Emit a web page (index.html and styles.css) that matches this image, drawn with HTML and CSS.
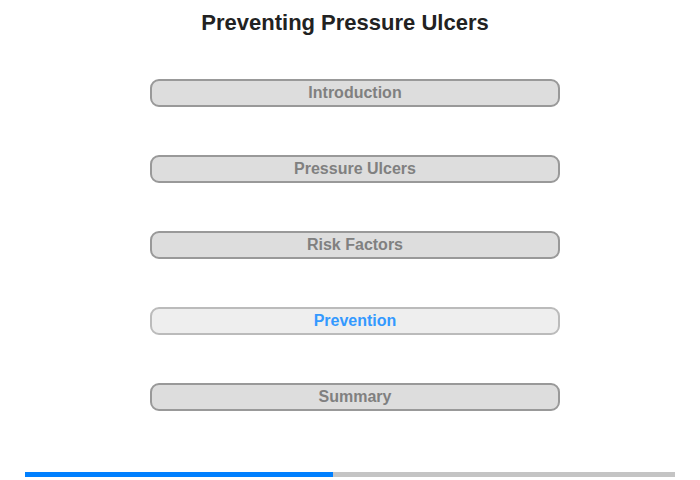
FILE: index.html
```html
<!DOCTYPE html>
<html lang="en">
<head>
  <meta charset="UTF-8" />
  <title>Preventing Pressure Ulcers</title>
  <link rel="stylesheet" href="styles.css">
</head>
<body>
  <div class="header">Preventing Pressure Ulcers</div>
  <div class="menu">
    <div class="menu-item">Introduction</div>
    <div class="menu-item">Pressure Ulcers</div>
    <div class="menu-item">Risk Factors</div>
    <div class="menu-item current">Prevention</div>
    <div class="menu-item">Summary</div>
  </div>
  <div class="progress">
    <div class="progress-done" style="width: 47.4%"></div>
  </div>
</body>
</html>
```

FILE: styles.css
```css
body {
  font-family: "Liberation Sans", Arial, sans-serif;
  background-color: #fff;
  margin: 0;
  padding: 0;
}

.header {
  color: #222;
  font-size: 22px;
  font-weight: bold;
  text-align: center;
  padding-top: 11px;
  padding-right: 10px;
  height: 24px;
  line-height: 24px;
}

.menu {
  display: flex;
  flex-direction: column;
  align-items: center;
  gap: 48px;
  margin-top: 44px;
  padding-left: 10px;
}

.menu-item {
  width: 406px;
  height: 24px;
  line-height: 24px;
  background-color: #dddddd;
  border: 2px solid #999;
  border-radius: 9px;
  color: #808080;
  font-size: 16px;
  font-weight: bold;
  text-align: center;
  cursor: pointer;
}

.menu-item.current {
  background-color: #eeeeee;
  border-color: #bbb;
  color: #3399ff;
}

.progress {
  margin: 61px 25px 0 25px;
  height: 5px;
  background-color: #c4c4c4;
}

.progress-done {
  height: 100%;
  background-color: #0080ff; /* blue */
}
```
